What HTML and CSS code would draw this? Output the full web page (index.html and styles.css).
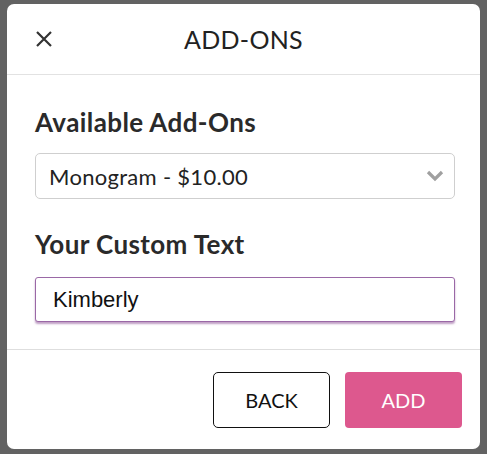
FILE: index.html
```html
<!DOCTYPE html>
<html>
  <head>
    <meta charset="UTF-8">
    <link rel="stylesheet" href="styles.css">
  </head>
  <body>
    <div class="modal">
      <div class="modal-header">
        <span class="close">
          <svg width="18" height="18" viewBox="0 0 18 18"><path d="M2 2 L16 16 M16 2 L2 16" stroke="#333" stroke-width="2.2" fill="none"/></svg>
        </span>
        <h1>ADD-ONS</h1>
      </div>

      <div class="modal-body">
        <h2>Available Add-Ons</h2>
        <div class="select">
          <span>Monogram - $10.00</span>
          <svg width="18" height="12" viewBox="0 0 18 12"><path d="M2 2 L9 9 L16 2" stroke="#a0a0a0" stroke-width="3.2" fill="none"/></svg>
        </div>

        <h2>Your Custom Text</h2>
        <input class="text-input" type="text" value="Kimberly">
      </div>

      <div class="modal-footer">
        <button class="btn btn-back">BACK</button>
        <button class="btn btn-add">ADD</button>
      </div>
    </div>
  </body>
</html>
```

FILE: styles.css
```css
html {
  height: 100%;
  margin: 0;
}
body {
  margin: 0;
  padding: 4px 0 0 7px;
  background-color: #626262;
  font-family: Lato, "Open Sans", sans-serif;
  color: #222;
}
.modal {
  width: 473px;
  height: 445px;
  background: white;
  border-radius: 7px;
  display: flex;
  flex-direction: column;
}
.modal-header {
  height: 70px;
  border-bottom: 1px solid #e2e2e2;
  display: flex;
  align-items: center;
  position: relative;
}
.close {
  margin-left: 28px;
  display: flex;
}
.modal-header h1 {
  position: absolute;
  left: 0;
  right: 0;
  margin: 0;
  text-align: center;
  font-size: 25px;
  font-weight: 400;
  letter-spacing: 0.3px;
  pointer-events: none;
}
.modal-body {
  padding: 32px 25px 0 28px;
  height: 242px;
  border-bottom: 1px solid #dedede;
}
.modal-body h2 {
  margin: 0 0 16px 0;
  font-size: 26px;
  line-height: 30px;
  font-weight: 700;
  letter-spacing: 0.4px;
  color: #2a2a2a;
}
.select {
  box-sizing: border-box;
  height: 46px;
  border: 1px solid #cfcfcf;
  border-radius: 5px;
  display: flex;
  align-items: center;
  justify-content: space-between;
  padding: 0 10px 0 13px;
  font-size: 22px;
  letter-spacing: 0.3px;
  margin-bottom: 30px;
}
.text-input {
  display: block;
  box-sizing: border-box;
  width: 100%;
  height: 45px;
  margin: 18px 0 0 0;
  border: 1px solid #9a68a6;
  border-radius: 3px;
  box-shadow: 0 2px 2px rgba(140, 80, 150, 0.55);
  padding: 0 17px;
  font-family: "Liberation Sans", Arial, sans-serif;
  font-size: 22px;
  color: #111;
  outline: none;
}
.modal-footer {
  display: flex;
  justify-content: flex-end;
  gap: 15px;
  padding: 22px 18px 0 0;
}
.btn {
  width: 117px;
  height: 56px;
  font-family: Lato, sans-serif;
  font-size: 20px;
  border-radius: 5px;
  cursor: pointer;
}
.btn-back {
  background: white;
  border: 1.5px solid #111;
  color: #111;
}
.btn-add {
  background: #dd588e;
  border: none;
  color: white;
  border-radius: 4px;
}
```
